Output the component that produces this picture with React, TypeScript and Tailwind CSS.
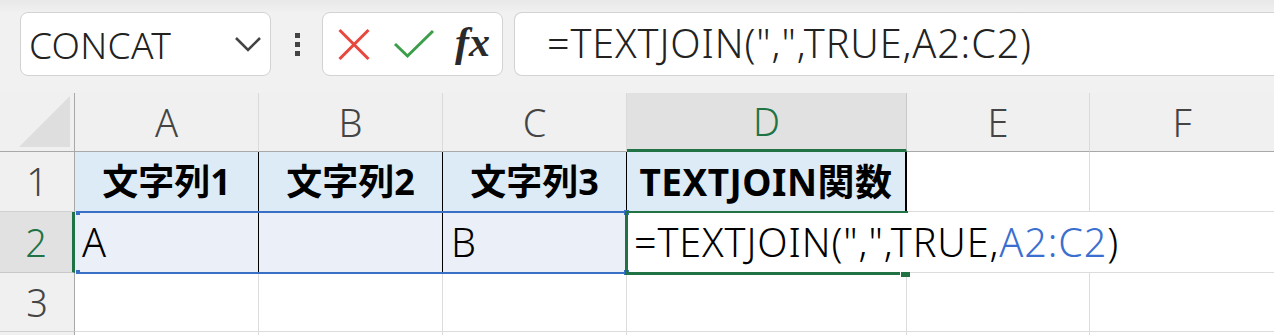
import React from "react";

const hdr = "flex items-center justify-center text-[38px] text-[#444] font-light";

export default function App() {
  return (
    <div className="w-[1274px] h-[335px] overflow-hidden bg-[#f0f0f0] font-['Noto_Sans','Noto_Sans_CJK_JP',sans-serif]">
      {/* Toolbar */}
      <div className="h-[93px] flex items-start pt-[12px] pl-[20px] bg-gradient-to-b from-[#e8e8e8] to-[#f1f1f1] to-[14%]">
        <div className="shrink-0 w-[251px] h-[64px] rounded-[8px] border border-[#d2d2d2] bg-white flex items-center pl-[8px] pr-[8px]">
          <span className="text-[37px] font-[350] text-[#222] leading-none flex-1 tracking-[0.3px]">CONCAT</span>
          <svg width="28" height="16" viewBox="0 0 28 16">
            <polyline points="2,2 14,14 26,2" fill="none" stroke="#444" strokeWidth="2.6" />
          </svg>
        </div>
        <div className="shrink-0 w-[51px] h-[64px] flex flex-col items-center justify-center gap-[4px] pl-[1px]">
          <div className="w-[5px] h-[5px] bg-[#444]" />
          <div className="w-[5px] h-[5px] bg-[#444]" />
          <div className="w-[5px] h-[5px] bg-[#444]" />
        </div>
        <div className="shrink-0 w-[181px] h-[64px] rounded-[8px] border border-[#d2d2d2] bg-white flex items-center pl-[15px]">
          <svg width="32" height="32" viewBox="0 0 32 32" className="shrink-0">
            <line x1="1.5" y1="2" x2="30.5" y2="31" stroke="#e8473e" strokeWidth="3" />
            <line x1="30.5" y1="2" x2="1.5" y2="31" stroke="#e8473e" strokeWidth="3" />
          </svg>
          <svg width="42" height="32" viewBox="0 0 42 32" className="ml-[23px] shrink-0">
            <polyline points="2,16 14.5,28 40,3" fill="none" stroke="#3c9e4a" strokeWidth="3" />
          </svg>
          <span className="ml-[20px] italic font-bold font-['Liberation_Serif',serif] text-[42px] leading-none text-[#2a2a2a] -mt-[4px]">fx</span>
        </div>
        <div className="shrink-0 ml-[11px] w-[900px] h-[64px] rounded-l-[8px] border border-r-0 border-[#d2d2d2] bg-white flex items-center pl-[32px]">
          <span className="text-[39.5px] font-[350] text-[#222] leading-none whitespace-nowrap tracking-[0.9px]">=TEXTJOIN(",",TRUE,A2:C2)</span>
        </div>
      </div>

      {/* Grid */}
      <div className="relative bg-white grid grid-cols-[75px_184px_184px_184px_280px_183px_184px] grid-rows-[59px_60px_61px_59px_10px]">
        {/* header row */}
        <div className="bg-[#f0f0f0] border-r border-b border-[#a8a8a8] relative">
          <svg width="52" height="52" viewBox="0 0 52 52" className="absolute right-[3px] bottom-[3px]">
            <polygon points="0,51 51,0 51,51" fill="#dedede" />
          </svg>
        </div>
        <div className={`${hdr} bg-[#f0f0f0] border-r border-[#dadada] border-b-[#a8a8a8] border-b`}>A</div>
        <div className={`${hdr} bg-[#f0f0f0] border-r border-[#dadada] border-b-[#a8a8a8] border-b`}>B</div>
        <div className={`${hdr} bg-[#f0f0f0] border-r border-[#dadada] border-b-[#a8a8a8] border-b`}>C</div>
        <div className="flex items-center justify-center text-[38px] font-light text-[#217346] bg-[#e1e1e1] border-r border-[#c8c8c8] border-b-[3px] border-b-[#217346]">D</div>
        <div className={`${hdr} bg-[#f0f0f0] border-r border-[#dadada] border-b-[#a8a8a8] border-b`}>E</div>
        <div className={`${hdr} bg-[#f0f0f0] border-b border-b-[#a8a8a8]`}>F</div>

        {/* row 1 */}
        <div className={`${hdr} bg-[#f0f0f0] border-r border-r-[#a8a8a8] border-b border-b-[#d0d0d0]`}>1</div>
        <div className="flex items-center justify-center bg-[#ddebf7] border-r border-r-black border-b border-b-[#d4d4d4] text-[36px] font-bold text-black">文字列1</div>
        <div className="flex items-center justify-center bg-[#ddebf7] border-r border-r-black border-b border-b-[#d4d4d4] text-[36px] font-bold text-black">文字列2</div>
        <div className="flex items-center justify-center bg-[#ddebf7] border-r border-r-black border-b border-b-[#d4d4d4] text-[36px] font-bold text-black">文字列3</div>
        <div className="flex items-center justify-center bg-[#ddebf7] border-l border-l-black border-r-2 border-r-black border-b border-b-[#d4d4d4] text-[37px] font-bold text-black whitespace-nowrap tracking-[0.5px] -ml-[1px]">TEXTJOIN関数</div>
        <div className="border-r border-b border-[#dcdcdc]" />
        <div className="border-b border-[#dcdcdc]" />

        {/* row 2 */}
        <div className="flex items-center justify-center text-[38px] font-light text-[#217346] bg-[#e1e1e1] border-r-[3px] border-r-[#217346] border-b border-b-[#c8c8c8]">2</div>
        <div className="flex items-center pl-[7px] bg-[#eaeff8] border-r border-r-black text-[39.5px] font-[350] text-black">A</div>
        <div className="flex items-center pl-[7px] bg-[#eaeff8] border-r border-r-black text-[39.5px] font-[350] text-black" />
        <div className="flex items-center pl-[8px] bg-[#eaeff8] text-[39.5px] font-[350] text-black">B</div>
        <div className="flex items-center pl-[7px] text-[39.5px] font-[350] text-black whitespace-nowrap tracking-[0.9px]">
          <span>=TEXTJOIN(",",TRUE,<span className="text-[#3a6fcf]">A2:C2</span>)</span>
        </div>
        <div className="border-b border-[#dcdcdc]" />
        <div className="border-b border-[#dcdcdc]" />

        {/* row 3 */}
        <div className={`${hdr} bg-[#f0f0f0] border-r border-r-[#a8a8a8] border-b border-b-[#d0d0d0]`}>3</div>
        <div className="border-r border-b border-[#dcdcdc]" />
        <div className="border-r border-b border-[#dcdcdc]" />
        <div className="border-r border-b border-[#dcdcdc]" />
        <div className="border-r border-b border-[#dcdcdc]" />
        <div className="border-r border-b border-[#dcdcdc]" />
        <div className="border-b border-[#dcdcdc]" />

        {/* row 4 */}
        <div className="bg-[#f0f0f0] border-r border-r-[#a8a8a8]" />
        <div className="border-r border-[#dcdcdc]" />
        <div className="border-r border-[#dcdcdc]" />
        <div className="border-r border-[#dcdcdc]" />
        <div className="border-r border-[#dcdcdc]" />
        <div className="border-r border-[#dcdcdc]" />
        <div />

        {/* range highlight A2:C2 */}
        <div className="absolute left-[76px] top-[118px] w-[551px] h-[63px] border-y-2 border-[#3a6fc6] pointer-events-none" />
        <div className="absolute left-[76px] top-[118px] w-[4px] h-[4px] bg-[#3a6fc6]" />
        <div className="absolute left-[76px] top-[177px] w-[4px] h-[4px] bg-[#3a6fc6]" />
        <div className="absolute left-[624px] top-[117px] w-[5px] h-[5px] bg-[#3a6fc6]" />
        <div className="absolute left-[624px] top-[177px] w-[5px] h-[5px] bg-[#3a6fc6]" />

        {/* active cell D2 (edit mode, open right side) */}
        <div className="absolute left-[625px] top-[118px] w-[283px] h-[64px] border-l-[3px] border-t-2 border-b-[3px] border-[#217346] pointer-events-none" />
        <div className="absolute left-[900px] top-[178px] w-[10px] h-[6px] bg-[#217346] border-l border-t border-white" />
      </div>
    </div>
  );
}
